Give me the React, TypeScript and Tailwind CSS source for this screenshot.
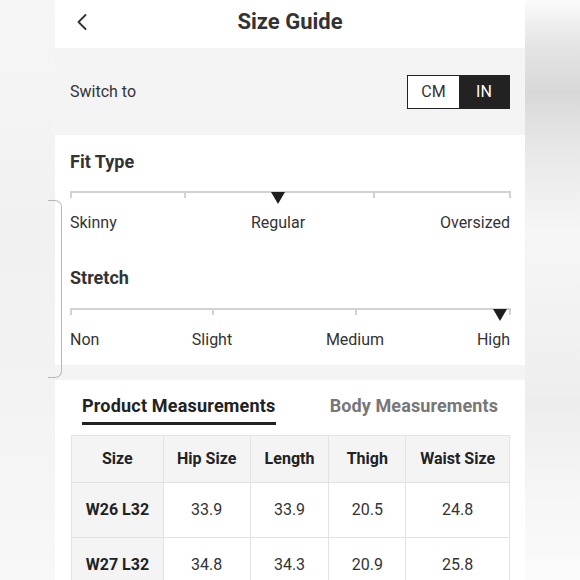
import { ChevronLeft } from "lucide-react";

type Scale = {
  ticks: number[];
  marker: number;
  labels: { text: string; at: number; align: "left" | "center" | "right" }[];
};

const fitType: Scale = {
  ticks: [0, 114, 303, 439],
  marker: 208,
  labels: [
    { text: "Skinny", at: 0, align: "left" },
    { text: "Regular", at: 208, align: "center" },
    { text: "Oversized", at: 440, align: "right" },
  ],
};

const stretch: Scale = {
  ticks: [0, 142, 285, 439],
  marker: 430,
  labels: [
    { text: "Non", at: 0, align: "left" },
    { text: "Slight", at: 142, align: "center" },
    { text: "Medium", at: 285, align: "center" },
    { text: "High", at: 440, align: "right" },
  ],
};

const columns = [
  { name: "Size", w: "w-[92px]" },
  { name: "Hip Size", w: "w-[87px]" },
  { name: "Length", w: "w-[79px]" },
  { name: "Thigh", w: "w-[77px]" },
  { name: "Waist Size", w: "w-[104px]" },
];

const rows = [
  ["W26 L32", "33.9", "33.9", "20.5", "24.8"],
  ["W27 L32", "34.8", "34.3", "20.9", "25.8"],
];

function ScaleBar({ scale }: { scale: Scale }) {
  return (
    <div className="relative h-[52px] w-[440px]">
      <div className="absolute left-0 top-[1px] h-[1.5px] w-[440px] bg-[#d2d2d2]" />
      {scale.ticks.map((t) => (
        <div
          key={t}
          className="absolute top-[1px] h-[7px] w-[1.5px] bg-[#d2d2d2]"
          style={{ left: t }}
        />
      ))}
      <div
        className="absolute top-[2px] h-0 w-0 border-x-[7px] border-t-[12px] border-x-transparent border-t-[#1e1e1e]"
        style={{ left: scale.marker - 7 }}
      />
      {scale.labels.map((l) => (
        <span
          key={l.text}
          className="absolute top-[22px] text-[16px] leading-[22px] text-[#333]"
          style={
            l.align === "left"
              ? { left: 0 }
              : l.align === "right"
                ? { right: 0 }
                : { left: l.at, transform: "translateX(-50%)" }
          }
        >
          {l.text}
        </span>
      ))}
    </div>
  );
}

export default function App() {
  return (
    <div
      className="relative flex h-[580px] w-[580px] overflow-hidden"
      style={{ fontFamily: "Roboto, 'Liberation Sans', sans-serif" }}
    >
      {/* blurred backdrop, left */}
      <div className="h-full w-[55px] bg-[linear-gradient(to_bottom,#f6f6f6_0%,#f1f1f1_40%,#f3f3f3_70%,#f8f8f8_100%)]" />

      {/* phone panel */}
      <div className="flex h-full w-[470px] flex-col bg-[#f4f4f4]">
        <header className="relative flex h-[48px] shrink-0 items-center justify-center bg-white pb-[6px]">
          <ChevronLeft
            className="absolute left-[13px] top-[8px] text-[#333]"
            size={28}
            strokeWidth={1.6}
          />
          <h1 className="text-[22px] font-bold text-[#333]">Size Guide</h1>
        </header>

        <div className="flex h-[87px] shrink-0 items-center justify-between px-[15px]">
          <span className="text-[16px] text-[#333]">Switch to</span>
          <div className="flex h-[34px] border border-[#222] text-[16px]">
            <span className="flex w-[51px] items-center justify-center bg-white text-[#333]">
              CM
            </span>
            <span className="flex w-[50px] items-center justify-center bg-[#222] text-white">
              IN
            </span>
          </div>
        </div>

        <section className="flex h-[230px] shrink-0 flex-col bg-white px-[15px] pt-[15px]">
          <h2 className="text-[18px] font-bold leading-[24px] text-[#333]">
            Fit Type
          </h2>
          <div className="mt-[16px]">
            <ScaleBar scale={fitType} />
          </div>
          <h2 className="mt-[24px] text-[18px] font-bold leading-[24px] text-[#333]">
            Stretch
          </h2>
          <div className="mt-[17px]">
            <ScaleBar scale={stretch} />
          </div>
        </section>

        <section className="mt-[15px] flex flex-1 flex-col bg-white">
          <div className="flex justify-between px-[27px] pt-[14px]">
            <div className="flex flex-col">
              <span className="text-[18px] font-bold leading-[24px] tracking-[0.2px] text-[#222]">
                Product Measurements
              </span>
              <div className="mt-[4px] h-[3px] bg-[#222]" />
            </div>
            <span className="text-[18px] font-bold leading-[24px] tracking-[0.1px] text-[#777]">
              Body Measurements
            </span>
          </div>

          <div className="ml-[16px] mt-[10px] w-[439px] border-l border-t border-[#e3e3e3]">
            <div className="flex h-[47px] bg-[#f4f4f4]">
              {columns.map((c) => (
                <div
                  key={c.name}
                  className={`${c.w} flex items-center justify-center border-b border-r border-[#e3e3e3] text-[16px] font-bold text-[#222]`}
                >
                  {c.name}
                </div>
              ))}
            </div>
            {rows.map((r) => (
              <div key={r[0]} className="flex h-[55px]">
                {r.map((v, i) => (
                  <div
                    key={i}
                    className={`${columns[i].w} flex items-center justify-center border-b border-r border-[#e3e3e3] text-[16px] ${
                      i === 0 ? "bg-[#f4f4f4] font-bold text-[#222]" : "bg-white text-[#333]"
                    }`}
                  >
                    {v}
                  </div>
                ))}
              </div>
            ))}
          </div>
        </section>
      </div>

      {/* blurred backdrop, right */}
      <div className="h-full w-[55px] bg-[linear-gradient(to_bottom,#fbfbfb_0%,#e4e4e4_8%,#d8d8d8_16%,#e8e8e8_26%,#f6f6f6_40%,#f2f2f2_55%,#ededed_70%,#f6f6f6_85%,#fbfbfb_100%)]" />

      {/* edge of a card peeking through on the left */}
      <div className="absolute left-[48px] top-[200px] h-[178px] w-[14px] rounded-r-[7px] border border-l-0 border-[#b8b8b8]" />
    </div>
  );
}
